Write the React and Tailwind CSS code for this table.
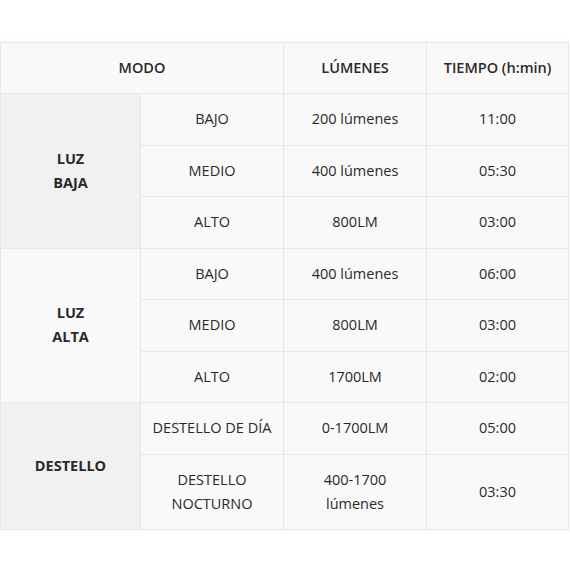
const groups = [
  {
    name: ['LUZ', 'BAJA'],
    bg: 'bg-[#f1f1f1]',
    rows: [
      ['BAJO', '200 lúmenes', '11:00'],
      ['MEDIO', '400 lúmenes', '05:30'],
      ['ALTO', '800LM', '03:00'],
    ],
  },
  {
    name: ['LUZ', 'ALTA'],
    bg: 'bg-[#f9f9f9]',
    rows: [
      ['BAJO', '400 lúmenes', '06:00'],
      ['MEDIO', '800LM', '03:00'],
      ['ALTO', '1700LM', '02:00'],
    ],
  },
  {
    name: ['DESTELLO'],
    bg: 'bg-[#f1f1f1]',
    rows: [
      ['DESTELLO DE DÍA', '0-1700LM', '05:00'],
      [['DESTELLO', 'NOCTURNO'], ['400-1700', 'lúmenes'], '03:30'],
    ],
  },
];

function Lines({ value }) {
  if (!Array.isArray(value)) return value;
  return value.map((line, i) => (
    <span key={i} className="block">{line}</span>
  ));
}

export default function App() {
  const cell = 'border border-[#e8e8e8] text-center align-middle px-2';
  return (
    <div className="w-[570px] h-[570px] bg-white pt-[42px] font-['Open_Sans',sans-serif] text-[#2a2a2a]">
      <table className="w-[569px] table-fixed border-collapse text-[14.5px] leading-[24px] shadow-[0_0_6px_rgba(0,0,0,0.04)]">
        <colgroup>
          <col className="w-[140px]" />
          <col className="w-[143px]" />
          <col className="w-[143px]" />
          <col />
        </colgroup>
        <thead>
          <tr className="h-[51px] bg-[#f9f9f9]">
            <th colSpan={2} className={cell + ' font-semibold'}>MODO</th>
            <th className={cell + ' font-semibold'}>LÚMENES</th>
            <th className={cell + ' font-semibold whitespace-nowrap'}>TIEMPO (h:min)</th>
          </tr>
        </thead>
        <tbody className="font-medium">
          {groups.map((g, gi) =>
            g.rows.map((r, ri) => (
              <tr key={gi + '-' + ri} className={Array.isArray(r[0]) ? 'h-[75px]' : 'h-[51.5px]'}>
                {ri === 0 && (
                  <td rowSpan={g.rows.length} className={cell + ' font-bold ' + g.bg}>
                    <Lines value={g.name} />
                  </td>
                )}
                <td className={cell + ' bg-[#f9f9f9] whitespace-nowrap'}><Lines value={r[0]} /></td>
                <td className={cell + ' bg-[#f9f9f9]'}><Lines value={r[1]} /></td>
                <td className={cell + ' bg-[#f9f9f9]'}>{r[2]}</td>
              </tr>
            ))
          )}
        </tbody>
      </table>
    </div>
  );
}
